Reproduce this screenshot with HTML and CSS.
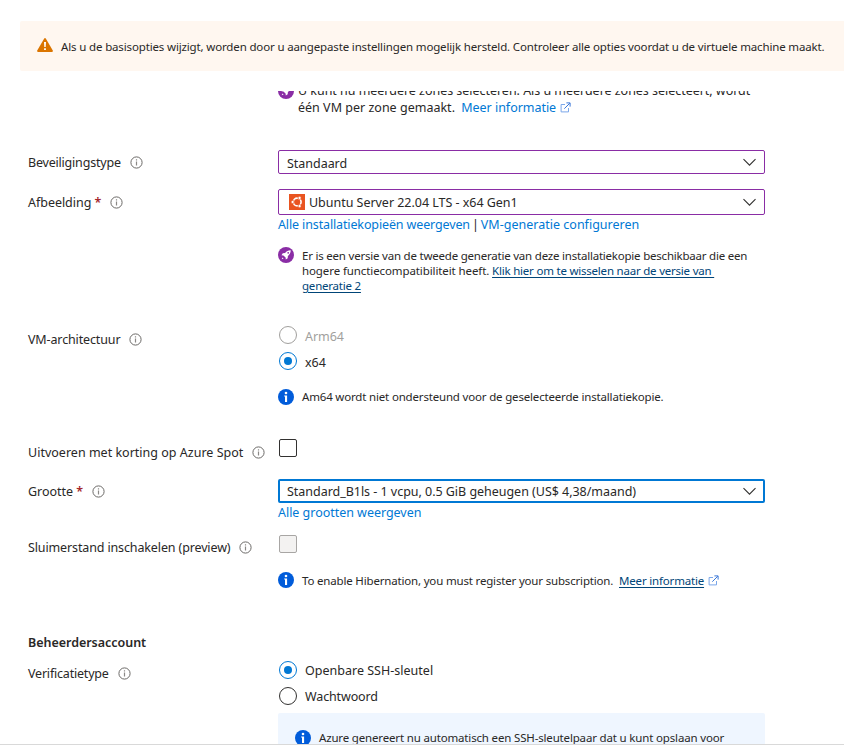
FILE: index.html
```html
<!DOCTYPE html>
<html lang="nl">
<head>
<meta charset="utf-8">
<title>Virtuele machine maken</title>
<link rel="stylesheet" href="styles.css">
</head>
<body>
<svg class="defs" aria-hidden="true">
  <symbol id="hint" viewBox="0 0 13 13"><circle cx="6.5" cy="6.5" r="5.6" fill="none" stroke="#6b6967"/><path d="M6.5 5.4v4.1M6.5 3.3v1.2" stroke="#8a8886" stroke-width="1.2"/></symbol>
  <symbol id="chevron" viewBox="0 0 13 8"><path d="M.5 1.2l6 6 6-6" fill="none" stroke="#323130" stroke-width="1.1"/></symbol>
  <symbol id="info" viewBox="0 0 16 16"><circle cx="8" cy="8" r="8" fill="#015cda"/><circle cx="8" cy="4" r="1.3" fill="#fff"/><path d="M6.2 6.4h2.9v6.6H7V7.6h-.8z" fill="#fff"/></symbol>
  <symbol id="rocket" viewBox="0 0 16 16"><circle cx="8" cy="8" r="8" fill="#8a2da5"/><path d="M12.7 3.3c-2.6 0-4.2 1-5.6 2.8L4.8 6.3 3.5 8.2l1.9.2 2.2 2.2.2 2 1.9-1.4.2-2.2c1.8-1.4 2.8-3 2.8-5.7z" fill="#fff"/><circle cx="10.2" cy="5.8" r=".9" fill="#8a2da5"/><path d="m3.7 12.3.7-1.9 1.2 1.2z" fill="#fff"/></symbol>
  <symbol id="external" viewBox="0 0 11 11"><path d="M5 2.5H1.1v7.4h7.4V6" fill="none" stroke="#7ba7ea"/><path d="M4.3 6.7 9.8 1.2M6.4.9h3.7v3.7" fill="none" stroke="#3b78d8"/></symbol>
</svg>

<div class="banner">
  <svg class="warning" viewBox="0 0 16 14"><path d="M7.2.5Q8-.3 8.8.5l7 12q.3 1.4-.9 1.5H1.1Q-.1 13.9.2 12.5z" fill="#db7500"/><path d="M7 4h2l-.3 5H7.3zM7.1 10.2h1.8V12H7.1z" fill="#fff"/></svg>
  <span class="small">Als u de basisopties wijzigt, worden door u aangepaste instellingen mogelijk hersteld. Controleer alle opties voordat u de virtuele machine maakt.</span>
</div>

<main class="form">
  <div class="row zones">
    <div class="label"></div>
    <div class="field zone-note">
      <svg class="icon"><use href="#rocket"/></svg>
      <p>U kunt nu meerdere zones selecteren. Als u meerdere zones selecteert, wordt<br><span class="wide">één VM per zone gemaakt. </span><a href="#">Meer informatie</a><svg class="external"><use href="#external"/></svg></p>
    </div>
  </div>

  <div class="row security">
    <div class="label"><span class="tight">Beveiligingstype</span><svg class="hint"><use href="#hint"/></svg></div>
    <div class="field"><div class="select low"><span>Standaard</span><svg class="chevron"><use href="#chevron"/></svg></div></div>
  </div>

  <div class="row image">
    <div class="label"><span>Afbeelding <b class="req">*</b></span><svg class="hint"><use href="#hint"/></svg></div>
    <div class="field">
      <div class="select tall">
        <svg class="ubuntu" viewBox="0 0 16 16"><path d="M0 0h16v16H0z" fill="#e95420"/><circle cx="8.2" cy="8" r="3.9" fill="none" stroke="#fff" stroke-width="1.6"/><g fill="#fff" stroke="#e95420" stroke-width=".7"><circle cx="3.6" cy="8" r="1.6"/><circle cx="10.6" cy="3.9" r="1.6"/><circle cx="10.6" cy="12.1" r="1.6"/></g></svg>
        <span>Ubuntu Server 22.04 LTS - x64 Gen1</span><svg class="chevron"><use href="#chevron"/></svg>
      </div>
      <div class="links"><a href="#" class="snug">Alle installatiekopieën weergeven</a><span>|</span><a href="#" class="wide">VM-generatie configureren</a></div>
      <div class="note generation">
        <svg class="icon"><use href="#rocket"/></svg>
        <p class="small">Er is een versie van de tweede generatie van deze installatiekopie beschikbaar die een<br><span class="loose">hogere functiecompatibiliteit heeft. </span><a href="#" class="dark">Klik hier om te wisselen naar de versie van&nbsp;<br>generatie 2</a></p>
      </div>
    </div>
  </div>

  <div class="row arch">
    <div class="label"><span class="snug">VM-architectuur</span><svg class="hint"><use href="#hint"/></svg></div>
    <div class="field">
      <div class="option disabled"><i class="radio"></i><span>Arm64</span></div>
      <div class="option"><i class="radio checked"></i><span>x64</span></div>
      <div class="note"><svg class="icon"><use href="#info"/></svg><p class="small">Am64 wordt niet ondersteund voor de geselecteerde installatiekopie.</p></div>
    </div>
  </div>

  <div class="row spot">
    <div class="label"><span class="wide">Uitvoeren met korting op Azure Spot</span><svg class="hint"><use href="#hint"/></svg></div>
    <div class="field"><i class="checkbox"></i></div>
  </div>

  <div class="row size">
    <div class="label"><span>Grootte <b class="req">*</b></span><svg class="hint"><use href="#hint"/></svg></div>
    <div class="field">
      <div class="select focused"><span>Standard_B1ls - 1 vcpu, 0.5 GiB geheugen (US$ 4,38/maand)</span><svg class="chevron"><use href="#chevron"/></svg></div>
      <div class="links"><a href="#">Alle grootten weergeven</a></div>
    </div>
  </div>

  <div class="row hibernate">
    <div class="label"><span class="snug">Sluimerstand inschakelen (preview)</span><svg class="hint"><use href="#hint"/></svg></div>
    <div class="field">
      <i class="checkbox off"></i>
      <div class="note"><svg class="icon"><use href="#info"/></svg><p class="small">To enable Hibernation, you must register your subscription. <a href="#" class="dark more">Meer informatie</a><svg class="external"><use href="#external"/></svg></p></div>
    </div>
  </div>

  <h2>Beheerdersaccount</h2>

  <div class="row auth">
    <div class="label"><span class="tight">Verificatietype</span><svg class="hint"><use href="#hint"/></svg></div>
    <div class="field">
      <div class="option"><i class="radio checked"></i><span class="wide">Openbare SSH-sleutel</span></div>
      <div class="option"><i class="radio"></i><span class="snug">Wachtwoord</span></div>
      <div class="ssh"><svg class="icon"><use href="#info"/></svg><p class="small">Azure genereert nu automatisch een SSH-sleutelpaar dat u kunt opslaan voor</p></div>
    </div>
  </div>
</main>
</body>
</html>
```

FILE: styles.css
```css
* { box-sizing: border-box; }
body {
  margin: 0;
  height: 756px;
  overflow: hidden;
  padding-top: 21px;
  background: #fff;
  color: #292827;
  font: 12.5px/17px "Noto Sans", "Open Sans", sans-serif;
  letter-spacing: -0.03px;
  white-space: nowrap;
}
p { margin: 0; }
svg { flex: none; display: block; }
a { color: #0078d4; text-decoration: none; }
a.dark { color: #004578; text-decoration: underline; text-underline-offset: 2px; }
.defs { position: absolute; width: 0; height: 0; }
.wide { letter-spacing: 0.01px; }
.snug { letter-spacing: -0.13px; }
.tight { letter-spacing: -0.2px; }
.small { font-size: 11.5px; line-height: 15px; letter-spacing: -0.175px; }

.banner {
  display: flex;
  align-items: center;
  height: 50px;
  margin-left: 20px;
  padding: 0 0 2px 17px;
  border-radius: 2px 0 0 2px;
  background: #fff7f0;
}
.banner .small { padding-top: 3px; letter-spacing: -0.148px; }
.warning { width: 16px; height: 14px; margin-right: 8px; }

.form {
  display: flow-root;
  height: 654px;
  margin-top: 20px;
  padding-left: 28px;
  overflow: hidden;
  border-bottom: 1px solid #d9d9d9;
}
.row { display: grid; grid-template-columns: 250px 487px; align-items: start; }
.label { display: flex; align-items: center; height: 17px; }
.hint { width: 13px; height: 13px; margin-left: 9px; }
.req { color: #a4262c; font-weight: 600; }
.icon { width: 16px; height: 16px; }
.external { display: inline-block; width: 11px; height: 11px; margin-left: 4px; vertical-align: -1px; }
.small .external { margin-left: 4px; }

.zones { margin-top: -9px; }
.zone-note { display: flex; gap: 4px; }
.zone-note .icon { margin-top: 1px; }
.zone-note a { margin-left: 3px; }

.security { margin-top: 34px; }
.security .label { margin-top: 4px; }
.image { margin-top: 15px; }
.image .label { margin-top: 5px; }
.arch { margin-top: 32px; }
.arch .label { margin-top: 5px; }
.spot { margin-top: 34px; }
.spot .label { margin-top: 5px; }
.size { margin-top: 18px; }
.size .label { margin-top: 4px; }
.hibernate { margin-top: 14px; }
.hibernate .label { margin-top: 4px; }
.auth { margin-top: 10px; }
.auth .label { margin-top: 4px; }

.select {
  display: flex;
  align-items: center;
  height: 24px;
  padding: 0 8px;
  border: 1px solid #8a2da5;
  border-radius: 2px;
}
.select.low span { padding-top: 2px; }
.select.tall { height: 26px; padding-left: 10px; }
.select.focused { border: 2px solid #0078d4; padding: 0 7px; }
.chevron { width: 13px; height: 8px; margin-left: auto; }
.ubuntu { width: 16px; height: 16px; margin-right: 4px; }
.links { display: flex; gap: 2px; margin-top: 1px; }

.note { display: flex; gap: 8px; height: 16px; }
.note p { padding-top: 1px; }
.arch .note p { padding-top: 0; }
.generation { height: 47px; margin-top: 14px; }
.generation .small { letter-spacing: -0.215px; }
.generation .loose { letter-spacing: -0.1px; }
.more { margin-left: 3px; }

.option { display: flex; align-items: center; gap: 8px; height: 18px; margin-bottom: 8px; }
.arch .option span { padding-top: 2px; }
.radio {
  display: grid;
  place-items: center;
  width: 18px;
  height: 18px;
  margin-left: 1px;
  border: 1px solid #323130;
  border-radius: 50%;
}
.radio.checked { border-color: #0078d4; }
.radio.checked::before { content: ""; width: 8px; height: 8px; border-radius: 50%; background: #0078d4; }
.disabled { color: #a19f9d; }
.disabled .radio { border-color: #a19f9d; }
.arch .note { margin-top: 19px; }

.checkbox { display: block; width: 18px; height: 18px; margin-left: 1px; border: 1px solid #323130; border-radius: 2px; }
.checkbox.off { border-color: #a8a6a4; background: #f3f2f1; }
.hibernate .note { margin-top: 19px; }

h2 { margin: 46px 0 0; font-size: 12.5px; line-height: 17px; font-weight: 600; }

.ssh {
  display: flex;
  gap: 8px;
  height: 60px;
  padding: 17px 17px 0;
  border-radius: 2px;
  background: #eff6ff;
}
.ssh p { letter-spacing: -0.165px; }
```
